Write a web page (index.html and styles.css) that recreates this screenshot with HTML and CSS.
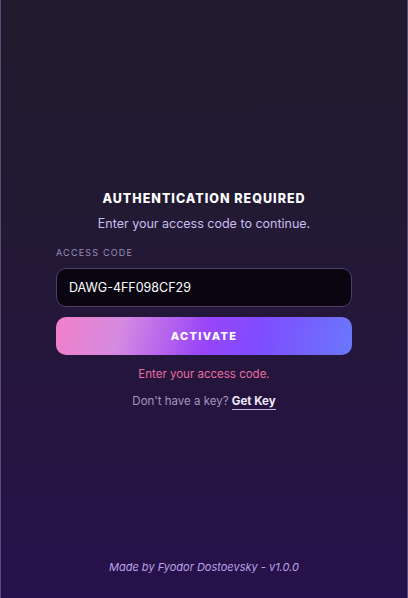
FILE: index.html
```html
<!DOCTYPE html>
<html lang="en">
<head>
    <meta charset="UTF-8">
    <meta name="viewport" content="width=device-width, initial-scale=1.0">
    <title>Authentication Required</title>
    <link rel="stylesheet" href="styles.css">
</head>
<body>
    <main class="auth">
        <h1 class="auth-title">AUTHENTICATION REQUIRED</h1>
        <p class="auth-subtitle">Enter your access code to continue.</p>

        <form class="auth-form">
            <label for="code" class="auth-label">ACCESS CODE</label>
            <input type="text" id="code" class="auth-input" value="DAWG-4FF098CF29">
            <button type="submit" class="auth-button">ACTIVATE</button>
        </form>

        <p class="auth-error">Enter your access code.</p>
        <p class="auth-help">Don't have a key? <a href="#" class="auth-link">Get Key</a></p>
    </main>

    <footer class="credits">
        <p>Made by Fyodor Dostoevsky - v1.0.0</p>
    </footer>
</body>
</html>
```

FILE: styles.css
```css
html, body {
    height: 100%;
}

body {
    margin: 0;
    font-family: 'Inter', 'Open Sans', sans-serif;
    color: #fff;
    background: linear-gradient(180deg, #201a2c 0%, #221a33 35%, #25143f 70%, #27114c 100%);
    border-left: 1px solid #5a4a78;
    border-right: 1px solid #5a4a78;
    box-sizing: border-box;
    display: grid;
    grid-template-rows: 1fr auto 1fr;
}

.auth {
    grid-row: 2;
    width: 296px;
    margin: 0 auto;
    text-align: center;
}

.auth-title {
    margin: 0;
    font-size: 12.5px;
    font-weight: 800;
    letter-spacing: 1px;
    color: #fff;
}

.auth-subtitle {
    margin: 10px 0 0;
    font-size: 12.5px;
    color: #cbbdf0;
}

.auth-form {
    display: flex;
    flex-direction: column;
    margin-top: 16px;
    text-align: left;
}

.auth-label {
    font-size: 9px;
    letter-spacing: 1.2px;
    color: #9c8db5;
    margin-bottom: 10px;
}

.auth-input {
    height: 39px;
    box-sizing: border-box;
    padding: 0 12px;
    background-color: #0a0611;
    border: 1px solid #4d3f66;
    border-radius: 10px;
    color: #fff;
    font-family: inherit;
    font-size: 12.5px;
}

.auth-button {
    margin-top: 10px;
    height: 38px;
    border: none;
    border-radius: 10px;
    background: linear-gradient(105deg, #f27fc9 0%, #d58be0 22%, #9a45f8 50%, #7f4cff 68%, #6a78fb 100%);
    color: #fff;
    font-family: inherit;
    font-size: 11px;
    font-weight: 800;
    letter-spacing: 1.3px;
    cursor: pointer;
}

.auth-error {
    margin: 12px 0 0;
    font-size: 11.5px;
    color: #e96ea3;
}

.auth-help {
    margin: 13px 0 0;
    font-size: 11.5px;
    color: #a495bd;
}

.auth-link {
    color: #f1e9ff;
    font-weight: 700;
    text-decoration: none;
    border-bottom: 1px solid #c7b4ef;
    padding-bottom: 1px;
}

.credits {
    grid-row: 3;
    align-self: end;
    text-align: center;
    padding-bottom: 24px;
}

.credits p {
    margin: 0;
    font-size: 11px;
    font-style: italic;
    color: #bca3e6;
}
```
